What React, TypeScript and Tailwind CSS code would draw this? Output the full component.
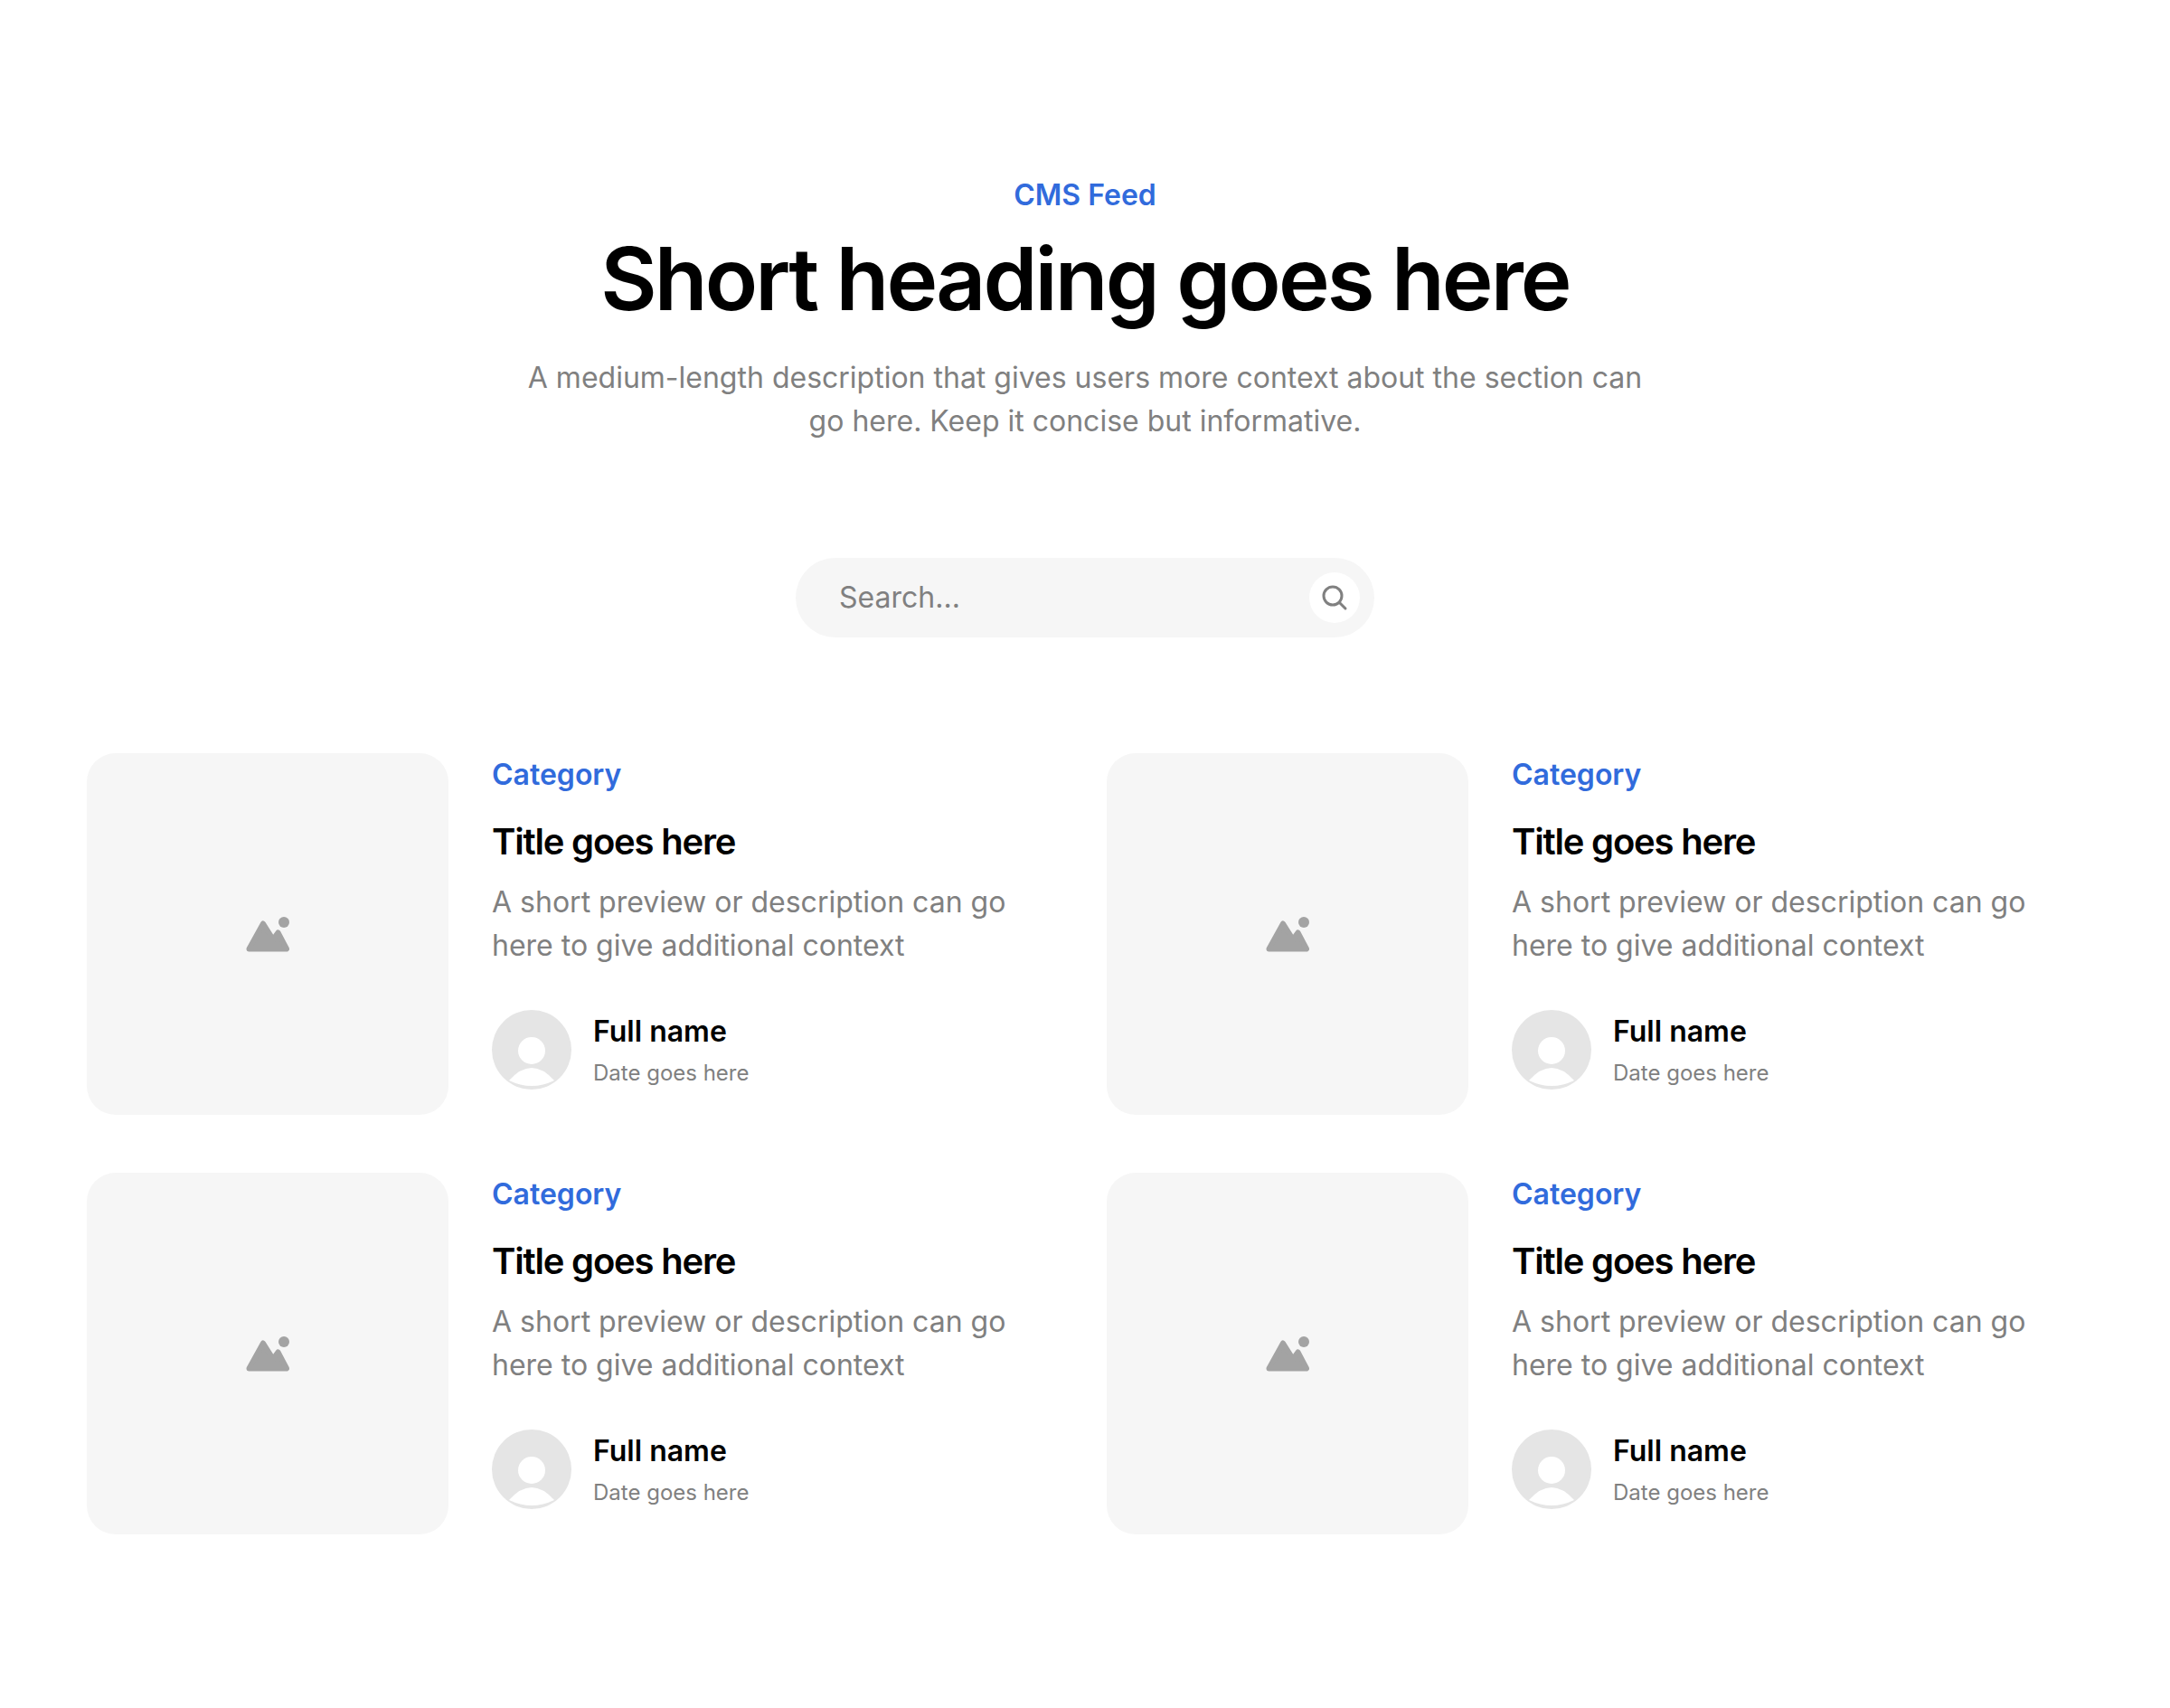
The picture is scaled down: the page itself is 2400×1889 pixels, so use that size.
const posts = [1, 2, 3, 4];

function ImageIcon() {
  return (
    <svg width="48" height="48" viewBox="0 1 48 48" fill="#a3a3a3">
      <circle cx="42" cy="12" r="6" />
      <path
        d="M3.5 41.5 L19 13.5 L30 31 L35.5 23.5 L45 41.5 Z"
        stroke="#a3a3a3"
        strokeWidth="6"
        strokeLinejoin="round"
      />
    </svg>
  );
}

function AvatarIcon() {
  return (
    <svg width="88" height="88" viewBox="0 0 88 88" className="shrink-0">
      <circle cx="44" cy="44" r="44" fill="#e5e5e5" />
      <circle cx="44" cy="45" r="15" fill="#ffffff" />
      <path d="M19 78 Q44 50 69 78 Q44 90 19 78 Z" fill="#ffffff" />
    </svg>
  );
}

function SearchIcon() {
  return (
    <svg width="32" height="32" viewBox="0 0 32 32" fill="none" stroke="#808080" strokeWidth="3" strokeLinecap="round">
      <circle cx="14" cy="14" r="10" />
      <path d="M21.5 21.5 L28 28" />
    </svg>
  );
}

function PostCard() {
  return (
    <div className="flex gap-12">
      <div className="flex h-[400px] w-[400px] shrink-0 items-center justify-center rounded-[32px] bg-[#f6f6f6]">
        <ImageIcon />
      </div>
      <div className="flex min-w-0 flex-col">
        <div className="text-[32px] leading-[48px] font-semibold text-[#316bdc]">Category</div>
        <h3 className="mt-[22px] text-[40px] leading-[56px] font-semibold tracking-[-0.03em] text-black">Title goes here</h3>
        <p className="mt-[15px] text-[32px] leading-[48px] text-[#808080]">
          A short preview or description can go
          <br />
          here to give additional context
        </p>
        <div className="mt-[47px] flex items-center gap-6">
          <AvatarIcon />
          <div className="flex flex-col gap-1">
            <div className="text-[32px] leading-[48px] font-semibold text-black">Full name</div>
            <div className="text-2xl leading-9 text-[#808080]">Date goes here</div>
          </div>
        </div>
      </div>
    </div>
  );
}

export default function App() {
  return (
    <div className="min-h-[1889px] bg-white px-24 pt-48 font-['Inter',sans-serif]">
      <div className="flex flex-col items-center text-center">
        <div className="text-[32px] leading-[48px] font-semibold text-[#316bdc]">CMS Feed</div>
        <h1 className="mt-[11px] text-8xl leading-[115px] font-semibold tracking-[-0.03em] text-black">Short heading goes here</h1>
        <p className="mt-7 max-w-[1248px] text-[32px] leading-[48px] text-[#808080]">
          A medium-length description that gives users more context about the section can go here. Keep it concise but
          informative.
        </p>
      </div>

      {/* Search */}
      <div className="mt-[127px] flex justify-center">
        <div className="flex h-[88px] w-[640px] items-center justify-between rounded-full bg-[#f6f6f6] pr-4 pl-12">
          <span className="text-[32px] leading-[48px] text-[#808080]">Search...</span>
          <div className="flex h-14 w-14 items-center justify-center rounded-full bg-white">
            <SearchIcon />
          </div>
        </div>
      </div>

      <div className="mt-32 grid grid-cols-2 gap-x-12 gap-y-16">
        {posts.map((id) => (
          <PostCard key={id} />
        ))}
      </div>
    </div>
  );
}
